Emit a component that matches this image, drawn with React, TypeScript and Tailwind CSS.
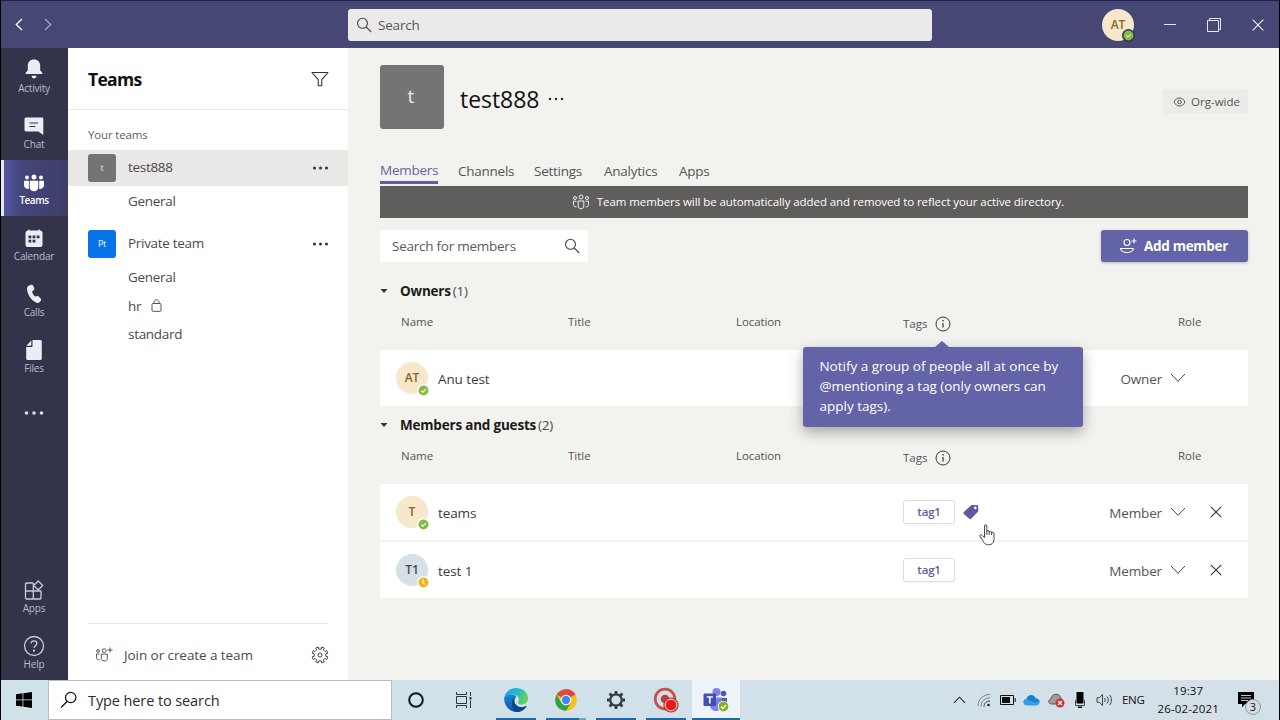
import { useState } from "react";
import type { ReactNode } from "react";

type RailItem = { label: string; icon: ReactNode };

const BellIcon = () => (
  <svg width="20" height="22" viewBox="0 0 20 22" fill="#ececf6">
    <path d="M10 1.500c-3.900 0-6.200 2.700-6.200 6.200v4.600L1.600 15v1h16.800v-1l-2.200-2.700V7.700C16.200 4.200 13.900 1.500 10 1.500z" />
    <path d="M7.400 17.700h5.200l-.9 2.100c-.8.8-2.600.8-3.400 0z" />
  </svg>
);

const ChatIcon = () => (
  <svg width="22" height="22" viewBox="0 0 22 22" className="translate-y-px">
    <path d="M3 2.500h16c.8 0 1.300.5 1.300 1.300V20l-5-3.500H3c-.8 0-1.500-.6-1.500-1.400V3.900c0-.8.7-1.400 1.500-1.400z" fill="#ececf6" />
    <path d="M6.500 8h8.500M6.500 11.500h6" stroke="#33344a" strokeWidth="1.200" />
  </svg>
);

const PeopleFilledIcon = () => (
  <svg width="22" height="20" viewBox="0 0 22 20" fill="#fff" className="translate-y-[3px]">
    <circle cx="4" cy="3.500" r="2" />
    <circle cx="11" cy="3" r="2.500" />
    <circle cx="18" cy="3.500" r="2" />
    <path d="M1 7.700c0-.6.400-1 1-1h3.800v8.200C3 14.900 1 13.400 1 11.200z" />
    <path d="M21 7.700c0-.6-.4-1-1-1h-3.800v8.200c2.800 0 4.800-1.500 4.800-3.700z" />
    <path d="M6.700 7.700c0-.6.400-1 1-1h6.600c.6 0 1 .4 1 1v5.200c0 2.600-1.900 4.300-4.300 4.300s-4.300-1.700-4.300-4.300z" />
  </svg>
);

const CalendarIcon = () => (
  <svg width="20" height="20" viewBox="0 0 20 20" className="translate-y-[1.500px]">
    <path d="M4.800 1v2M15.200 1v2" stroke="#ececf6" strokeWidth="1.200" />
    <rect x="1.500" y="2" width="17" height="16.500" rx="2.500" fill="#ececf6" />
    <g fill="#33344a">
      <rect x="4.500" y="7" width="2.800" height="2.800" />
      <rect x="8.600" y="7" width="2.800" height="2.800" />
      <rect x="12.700" y="7" width="2.800" height="2.800" />
      <rect x="4.500" y="11.200" width="2.800" height="2.800" />
      <rect x="8.600" y="11.200" width="2.800" height="2.800" />
    </g>
  </svg>
);

const PhoneIcon = () => (
  <svg width="16" height="20" viewBox="0 0 16 20" fill="#ececf6" className="translate-y-px">
    <path d="M2.600 1.800 5.200.8c.9-.3 1.600.1 2 .9l1 2.400c.3.7.1 1.400-.4 1.900L6 7.800c.5 1.700 1.600 3.500 3 4.800l2-.6c.7-.2 1.300 0 1.800.5l1.900 2.100c.6.7.6 1.600 0 2.300l-1 1.100c-.8.8-2 1.100-3.100.7C5.500 16.700 1.300 10.800 1 4.800c0-1.400.5-2.500 1.600-3z" />
  </svg>
);

const FileIcon = () => (
  <svg width="18" height="22" viewBox="0 0 18 22" className="translate-y-px">
    <path d="M7.500 1h7.800c.8 0 1.500.7 1.500 1.500v17c0 .8-.7 1.500-1.500 1.500H2.700c-.8 0-1.500-.7-1.500-1.500V8h5.300c.6 0 1-.4 1-1z" fill="#ececf6" />
    <path d="M6.300 1.600v4.200c0 .5-.3.900-.8.900H1.400z" fill="#ececf6" />
  </svg>
);

const AppsIcon = () => (
  <svg width="20" height="20" viewBox="0 0 20 20" fill="none" stroke="#c9cade" strokeWidth="1.300" className="translate-y-px">
    <path d="M9.300 3H2.500c-.5 0-1 .4-1 1v14c0 .5.500 1 1 1H16c.5 0 1-.5 1-1v-7.200M1.500 11H17M9.300 3v16M9.300 11V8" />
    <path d="m14.200 1 4.500 4.500-4.500 4.500-4.500-4.500z" strokeLinejoin="round" />
  </svg>
);

const HelpIcon = () => (
  <svg width="22" height="22" viewBox="0 0 22 22" fill="none" stroke="#c9cade" strokeWidth="1.300" className="translate-y-px">
    <circle cx="11" cy="11" r="9.500" />
    <path d="M8.200 8.600c0-1.800 1.200-2.800 2.800-2.800s2.800 1 2.800 2.600c0 2.200-2.800 2.300-2.800 4.600" />
    <circle cx="11" cy="15.700" r=".5" fill="#c9cade" />
  </svg>
);

const Dots = () => (
  <svg width="22" height="6" viewBox="0 0 22 6" fill="#333">
    <circle cx="4.500" cy="3" r="1.500" />
    <circle cx="10.500" cy="3" r="1.500" />
    <circle cx="16.500" cy="3" r="1.500" />
  </svg>
);

const SearchIcon = () => (
  <svg width="16" height="16" viewBox="0 0 16 16" fill="none" stroke="#484644" strokeWidth="1.100">
    <circle cx="6.500" cy="6.300" r="5" />
    <path d="m10.200 10 5 5" />
  </svg>
);

const ChevronDown = () => (
  <svg width="16" height="10" viewBox="0 0 16 10" fill="none" stroke="#484644" strokeWidth="1">
    <path d="m1 1 7 7.300L15 1" />
  </svg>
);

const InfoIcon = () => (
  <svg width="16" height="16" viewBox="0 0 16 16" fill="none" stroke="#363534" strokeWidth="1">
    <circle cx="8" cy="8" r="7" />
    <path d="M8 7v4.500" strokeWidth="1.200" />
    <circle cx="8" cy="4.800" r=".4" fill="#363534" />
  </svg>
);

const Presence = ({ away }: { away?: boolean }) => (
  <svg width="13" height="13" viewBox="0 0 13 13" className="absolute -right-[1.500px] -bottom-[2.500px]">
    <circle cx="6.500" cy="6.500" r="6.500" fill="#fff" />
    <circle cx="6.500" cy="6.500" r="5" fill={away ? "#f0b51d" : "#86bb48"} />
    <path d={away ? "M6 3.500v3.300l2 1.700" : "m4.200 6.600 1.700 1.600 2.900-3"} fill="none" stroke="#fff" strokeWidth="1.100" />
  </svg>
);

const topItems: RailItem[] = [
  { label: "Activity", icon: <BellIcon /> },
  { label: "Chat", icon: <ChatIcon /> },
  { label: "Teams", icon: <PeopleFilledIcon /> },
  { label: "Calendar", icon: <CalendarIcon /> },
  { label: "Calls", icon: <PhoneIcon /> },
  { label: "Files", icon: <FileIcon /> },
];

const bottomItems: RailItem[] = [
  { label: "Apps", icon: <AppsIcon /> },
  { label: "Help", icon: <HelpIcon /> },
];

const RailButton = ({ item, active, onClick }: { item: RailItem; active?: boolean; onClick?: () => void }) => (
  <button
    type="button"
    onClick={onClick}
    className={`flex h-14 w-full flex-col items-center pt-[10px] ${
      active
        ? "border-l-[3px] border-[#e4e4f6] bg-linear-to-r from-[#5357a0] via-[#44467c] via-25% to-[#3d3e66] pr-[4px] font-semibold text-white"
        : "pr-px text-[#b9bad0]"
    }`}
  >
    <span className="flex h-[22px] items-center">{item.icon}</span>
    <span className={`mt-px text-[10px] leading-[14px] ${active ? "tracking-[-0.5px]" : "tracking-[-0.2px]"}`}>
      {item.label}
    </span>
  </button>
);

const TitleBar = () => (
  <header className="flex h-12 shrink-0 items-center border-t border-[#1f1f45] bg-[#464775]">
    <div className="flex w-[347px] items-center gap-[21px] pl-[14px]">
      <svg width="8" height="13" viewBox="0 0 8 13" fill="none" stroke="#fff" strokeWidth="1.300">
        <path d="M7 1 1.300 6.500 7 12" />
      </svg>
      <svg width="8" height="13" viewBox="0 0 8 13" fill="none" stroke="#a9a9cf" strokeWidth="1.200">
        <path d="m1 1 5.700 5.500L1 12" />
      </svg>
    </div>
    <div className="flex h-8 w-[584px] items-center gap-[6px] rounded-[3px] bg-[#ebeae8] pl-2 text-[13.5px] tracking-[-0.2px] text-[#555]">
      <SearchIcon />
      <span className="pt-px">Search</span>
    </div>
    <div className="ml-[170px] flex items-center">
      <div className="relative flex h-8 w-8 items-center justify-center rounded-full bg-[#f7e7cb] text-[12px] font-semibold text-[#84662d]">
        AT
        <svg width="13" height="13" viewBox="0 0 13 13" className="absolute -right-px -bottom-px">
          <circle cx="6.500" cy="6.500" r="6.500" fill="#33344a" />
          <circle cx="6.500" cy="6.500" r="4.900" fill="#86bb48" />
          <path d="m4.200 6.600 1.700 1.600 2.900-3" fill="none" stroke="#fff" />
        </svg>
      </div>
      <svg width="12" height="14" viewBox="0 0 12 14" className="ml-[30px]" stroke="#e6e6f5" strokeWidth="1">
        <path d="M0 6.500h12" />
      </svg>
      <svg width="16" height="16" viewBox="0 0 16 16" className="ml-[30px]" fill="none" stroke="#e6e6f5" strokeWidth="1">
        <path d="M1.500 3.500h11v11h-11zM3.500 3.500v-2h11v11h-2" />
      </svg>
      <svg width="12" height="12" viewBox="0 0 12 12" className="ml-[30px]" stroke="#f2f2fa" strokeWidth="1.100">
        <path d="m.7.7 10.600 10.600M11.300.7.7 11.300" />
      </svg>
    </div>
  </header>
);

const Channel = ({ name, locked, first }: { name: string; locked?: boolean; first?: boolean }) => (
  <li className={`flex items-center gap-[10px] pl-[60px] ${first ? "h-[30px]" : "h-7"}`}>
    {name}
    {locked && (
      <svg width="11" height="13" viewBox="0 0 11 13" fill="none" stroke="#555" className="-mt-[2px]">
        <rect x="1" y="4.500" width="9" height="7.800" rx="1" />
        <path d="M3 4.500V3.200C3 1.800 4 .8 5.500.8S8 1.800 8 3.200v1.300" />
      </svg>
    )}
  </li>
);

const Sidebar = () => (
  <aside className="flex w-[280px] shrink-0 flex-col bg-white text-[13.5px] tracking-[-0.3px] text-[#4b4a49]">
    <div className="flex h-[62px] items-center justify-between border-b border-[#ebebea] pr-[19px] pl-5">
      <h1 className="pt-[2px] text-[17.500px] font-bold tracking-[-0.7px] text-[#111]">Teams</h1>
      <svg width="18" height="16" viewBox="0 0 18 16" fill="none" stroke="#333" strokeWidth="1.100" strokeLinejoin="round">
        <path d="M1 1.500h16l-6.200 7.200v6H7.200v-6z" />
      </svg>
    </div>
    <p className="h-[40px] pt-[16px] pl-5 text-[11.5px] leading-[18px] tracking-[-0.15px] text-[#615f5e]">Your teams</p>
    <div className="flex h-9 items-center bg-[#e9e8e7] pr-[16px] pl-5">
      <span className="flex h-7 w-7 items-center justify-center rounded-[3px] bg-[#747474] text-[9px] text-[#e5e5e5]">t</span>
      <span className="-mt-[2px] ml-3 flex-1">test888</span>
      <Dots />
    </div>
    <ul>
      <Channel name="General" first />
    </ul>
    <div className="mt-[10px] flex h-9 items-center pr-[16px] pl-5">
      <span className="flex h-7 w-7 items-center justify-center rounded-[3px] bg-[#0673e8] text-[9px] text-white">Pt</span>
      <span className="-mt-px ml-3 flex-1">Private team</span>
      <Dots />
    </div>
    <ul>
      <Channel name="General" first />
      <Channel name="hr" locked />
      <Channel name="standard" />
    </ul>
    <div className="mx-5 mt-auto flex h-[57px] items-center border-t border-[#e6e6e6] pt-[5px] pl-[7px] tracking-[-0.07px]">
      <svg width="18" height="16" viewBox="0 0 18 16" fill="none" stroke="#444" strokeWidth=".9">
        <circle cx="3" cy="4" r="1.400" />
        <circle cx="9.200" cy="3.700" r="1.900" />
        <path d="M4.500 7H1.500v3.500c0 1.500 1 2.300 3 2.300M6.300 7.200h6v4.500c0 1.400-1.300 2.300-3 2.300s-3-.9-3-2.300zM15 .5v5M12.500 3h5" />
      </svg>
      <span className="ml-[11px] flex-1 pt-px">Join or create a team</span>
      <svg width="18" height="18" viewBox="0 0 18 18" fill="none" stroke="#444" strokeLinejoin="round" className="-mr-px">
        <path d="m7.300 1 .4 2 1.300.2 1.300-.2.4-2 2.700 1.100-1.100 1.700 1.700 1.700 1.700-1.100L16.800 7.200l-2 .5v2.600l2 .5-1.100 2.700-1.700-1.100-1.700 1.700 1.100 1.700-2.700 1.100-.4-2H7.700l-.4 2-2.700-1.100 1.100-1.700L4 12.400l-1.700 1.100L1.200 10.800l2-.5V7.700l-2-.5 1.100-2.800L4 5.500l1.700-1.700-1.100-1.700z" />
        <circle cx="9" cy="9" r="2" />
      </svg>
    </div>
  </aside>
);

const Tag = () => (
  <span className="flex h-[24px] w-[52px] items-center justify-center rounded-[3px] border border-[#dcdce8] text-[11.5px] font-semibold tracking-[-0.2px] text-[#5f5d9e] shadow-xs">
    tag1
  </span>
);

const SectionTitle = ({ title, count }: { title: string; count: number }) => (
  <div className="flex h-[30px] items-center text-[13.5px]">
    <svg width="8" height="5" viewBox="0 0 8 5" fill="#333">
      <path d="M.5 0h7L4 4z" />
    </svg>
    <h3 className="ml-3 font-bold tracking-[-0.2px] text-[#1b1a19]">{title}</h3>
    <span className="ml-[2px] tracking-[-0.3px] text-[#4b4a49]">({count})</span>
  </div>
);

const ColumnHeader = ({ tooltip }: { tooltip?: boolean }) => (
  <div className="flex h-11 items-center pb-[12px] pl-[21px] text-[11.5px] text-[#555453]">
    <span className="w-[167px]">Name</span>
    <span className="w-[168px]">Title</span>
    <span className="w-[167px] tracking-[-0.1px]">Location</span>
    <span className="flex w-[275px] items-center pt-1">
      Tags
      <span className="relative ml-[8px]">
        <InfoIcon />
        {tooltip && (
          <span className="absolute top-[31px] -left-[132px] z-10 flex h-20 w-[280px] flex-col rounded-[3px] bg-[#6264a7] px-4 py-[9px] text-[13.5px] leading-5 text-white shadow-[0_5px_14px_rgba(0,0,0,0.32)]">
            <span className="absolute -top-[6px] left-[132px] border-x-[7px] border-b-[6px] border-x-transparent border-b-[#6264a7]" />
            <span className="whitespace-nowrap">Notify a group of people all at once by</span>
            <span className="whitespace-nowrap tracking-[-0.05px]">@mentioning a tag (only owners can</span>
            <span className="whitespace-nowrap">apply tags).</span>
          </span>
        )}
      </span>
    </span>
    <span>Role</span>
  </div>
);

type Member = { initials: string; name: string; role: string; color: string; away?: boolean; tag?: boolean; tagIcon?: boolean };

const MemberRow = ({ initials, name, role, color, away, tag, tagIcon }: Member) => (
  <div className="flex h-14 items-center bg-white pl-4 text-[13.5px] text-[#555453]">
    <div className={`relative flex h-8 w-8 items-center justify-center rounded-full text-[12px] font-semibold ${color}`}>
      {initials}
      <Presence away={away} />
    </div>
    <span className="ml-[10px] w-[465px] pt-[2px] tracking-[-0.1px] text-[#3b3a39]">{name}</span>
    <div className="relative flex w-[160px] items-center gap-[8px]">
      {tag && <Tag />}
      {tagIcon && (
        <svg width="16" height="16" viewBox="0 0 16 16" fill="#6358a0" className="-mt-px">
          <path d="M8.500 1h5.300c.8 0 1.400.6 1.400 1.400v5.200L8.300 14.600c-.8.7-1.500.7-2.200 0L.8 9.900c-.5-.6-.5-1.200 0-1.800zM12.300 2.600a1.300 1.300 0 1 0 0 2.600 1.300 1.300 0 0 0 0-2.600z" fillRule="evenodd" />
        </svg>
      )}
      {tagIcon && (
        <svg width="17" height="22" viewBox="0 0 17 22" className="absolute top-[24px] left-[76px] z-10" fill="#fff" stroke="#333" strokeWidth=".9" strokeLinejoin="round">
          <path d="M5.500 13.500V2c0-1.700 2.300-1.700 2.300 0v5.500c0-1.300 2.400-1.300 2.400 0v.7c0-1.200 2.400-1.200 2.400.2v.7c0-1.200 2.400-1.200 2.400.2v5.200c0 3.500-1.600 6.300-5.500 6.300-3 0-4.200-1.300-5.600-4.200L1 12.300c-.6-1.500 1.200-2.300 2.200-1zM7.800 7.500V11M10.200 8v3M12.600 8.700V11" />
        </svg>
      )}
    </div>
    <div className="flex w-[123px] items-center justify-end gap-2">
      <span className="pt-[2px] tracking-[-0.15px]">{role}</span>
      <ChevronDown />
    </div>
    {tag && (
      <svg width="12" height="12" viewBox="0 0 12 12" className="ml-[24px]" stroke="#333" strokeWidth="1.100">
        <path d="m.8.8 10.400 10.400M11.200.8.8 11.200" />
      </svg>
    )}
  </div>
);

const tabs = [
  { name: "Members", width: "w-[58px]" },
  { name: "Channels", width: "w-[56px]" },
  { name: "Settings", width: "w-[50px]" },
  { name: "Analytics", width: "w-[55px]" },
  { name: "Apps", width: "w-[32px]" },
];

const TeamPage = () => {
  const [tab, setTab] = useState("Members");

  return (
    <main className="flex-1 bg-[#f2f2ee] pr-[31px] pl-8">
      <div className="flex h-[97px] items-start pt-[17px]">
        <div className="flex h-16 w-16 items-center justify-center rounded-[3px] bg-[#747474] pb-px pr-[2px] text-[19px] text-[#e8e8e8]">t</div>
        <h2 className="mt-[18px] ml-4 text-[23px] leading-8 font-medium tracking-[-0.05px] text-[#111]">test888</h2>
        <svg width="16" height="4" viewBox="0 0 16 4" className="mt-[32px] ml-[9px]" fill="#222">
          <circle cx="2" cy="2" r="1.200" />
          <circle cx="8" cy="2" r="1.200" />
          <circle cx="14" cy="2" r="1.200" />
        </svg>
        <div className="mt-[24px] ml-auto flex h-[25px] items-center gap-[5px] rounded-[2px] bg-[#ebebe8] pr-2 pl-[10px] text-[11.5px] text-[#555453]">
          <svg width="13" height="12" viewBox="0 0 12 12" fill="none" stroke="#555">
            <path d="M.6 6C1.700 3.400 3.600 2 6 2s4.300 1.400 5.400 4C10.300 8.600 8.400 10 6 10S1.700 8.600.6 6z" />
            <circle cx="6" cy="6" r="1.800" />
          </svg>
          Org-wide
        </div>
      </div>

      <nav className="mt-[11px] flex h-[30px] gap-5 text-[13.5px] tracking-[-0.25px]">
        {tabs.map((t) => (
          <button
            key={t.name}
            type="button"
            onClick={() => setTab(t.name)}
            className={`${t.width} h-7 whitespace-nowrap text-left ${
              tab === t.name ? "border-b-[3px] border-[#5f5d9e] pt-[3px] leading-[22px] text-[#6264a7]" : "pt-[2px] leading-[26px] text-[#555453]"
            }`}
          >
            {t.name}
          </button>
        ))}
      </nav>

      <div className="flex h-8 items-center justify-center bg-[#5f5e5c] pl-2 text-[11.5px] tracking-[-0.08px] text-white">
        <svg width="18" height="16" viewBox="0 0 18 16" className="mr-[7px]" fill="none" stroke="#fff" strokeWidth=".9">
          <circle cx="3" cy="4" r="1.500" />
          <circle cx="9" cy="3" r="2" />
          <circle cx="15" cy="4" r="1.500" />
          <path d="M4.500 7.200h-3v3.300c0 1.500 1 2.500 3 2.500M13.500 7.200h3v3.300c0 1.500-1 2.500-3 2.500M6.200 7h5.600v5c0 1.700-1.200 2.800-2.800 2.800S6.200 13.700 6.200 12z" />
        </svg>
        Team members will be automatically added and removed to reflect your active directory.
      </div>

      <div className="mt-3 flex h-8 justify-between">
        <div className="flex w-[208px] items-center justify-between rounded-[3px] bg-white pr-2 pl-3 text-[13.5px] tracking-[-0.25px] text-[#5b5a58]">
          Search for members
          <SearchIcon />
        </div>
        <button type="button" className="flex w-[147px] items-center rounded-[3px] bg-[#6264a7] pl-[18px] text-[13.5px] font-bold tracking-[-0.3px] text-white shadow-[0_1px_3px_rgba(0,0,0,0.25)]">
          <svg width="18" height="16" viewBox="0 0 18 16" className="mr-[7px]" fill="none" stroke="#fff" strokeWidth="1.100">
            <circle cx="8" cy="4.500" r="3" />
            <path d="M1.500 10.500h13c-.5 2.700-3 4-6.500 4s-6-1.300-6.500-4zM15 .5v5M12.500 3h5" />
          </svg>
          <span className="pt-px">Add member</span>
        </button>
      </div>

      <section className="mt-[14px]">
        <SectionTitle title="Owners" count={1} />
        <ColumnHeader tooltip />
        <MemberRow initials="AT" name="Anu test" role="Owner" color="bg-[#f7e7cb] text-[#84662d]" />
      </section>
      <section className="mt-[4px]">
        <SectionTitle title="Members and guests" count={2} />
        <ColumnHeader />
        <div className="flex flex-col gap-[2px]">
          <MemberRow initials="T" name="teams" role="Member" color="bg-[#f7e7cb] text-[#84662d]" tag tagIcon />
          <MemberRow initials="T1" name="test 1" role="Member" color="bg-[#d5e0e8] text-[#3c4d57]" away tag />
        </div>
      </section>
    </main>
  );
};

const EdgeIcon = () => (
  <svg width="26" height="26" viewBox="0 0 26 26">
    <defs>
      <linearGradient id="edgeTop" x1="0" y1="0" x2="1" y2=".4">
        <stop offset="0" stopColor="#1e9fe0" />
        <stop offset=".55" stopColor="#2bb9c9" />
        <stop offset="1" stopColor="#5fd35a" />
      </linearGradient>
      <linearGradient id="edgeBody" x1="0" y1="0" x2="0" y2="1">
        <stop offset="0" stopColor="#1a86d6" />
        <stop offset="1" stopColor="#0f57a8" />
      </linearGradient>
    </defs>
    <path d="M1 12c.8 7.500 6 13 12.500 13 4 0 7.300-1.700 9.700-5.200.3-.5-.1-.9-.6-.6-5.600 2.800-11.300-.4-11.300-5.600 0-1.600.6-3 2-4.100C8.500 5.500 2 6.500 1 12z" fill="url(#edgeBody)" />
    <path d="M9.800 12.500c-2 4.500-.5 9.800 3.700 12.500 4 0 7.300-1.700 9.700-5.200.3-.5-.1-.9-.6-.6-5.600 2.800-11.300-.4-11.300-5.600 0-1.300.4-2.500 1.300-3.500-1.200.2-2.200 1.100-2.800 2.400z" fill="#0c4587" />
    <path d="M1 12C1.500 5.700 6.700 1 13 1c6.800 0 12 4.800 12 10.300 0 3.900-2.800 6.200-6.200 6.200-2.200 0-3.800-.9-3.800-1.800 0-.7.900-1.200.9-2.900 0-2.900-2.800-5.200-6.700-5.200-3.900 0-7 1.600-8.200 4.400z" fill="url(#edgeTop)" />
  </svg>
);

const ChromeIcon = () => (
  <svg width="22" height="22" viewBox="0 0 22 22">
    <circle cx="11" cy="11" r="10.800" fill="#fbc116" />
    <path d="M11 11 1.650 5.600A10.800 10.800 0 0 1 20.350 5.600z" fill="#dd4a3c" />
    <path d="M11 5.600h9.350A10.800 10.800 0 0 0 11 .2z" fill="#dd4a3c" />
    <path d="M1.650 5.600A10.800 10.800 0 0 0 11 21.800l4.700-8.100L11 11 6.300 13.700z" fill="#2ea04f" />
    <circle cx="11" cy="11" r="5.300" fill="#fff" />
    <circle cx="11" cy="11" r="4.200" fill="#4285f4" />
  </svg>
);

const CogIcon = () => (
  <svg width="20" height="20" viewBox="0 0 20 20" fill="none" stroke="#333a3d">
    <circle cx="10" cy="10" r="5.700" strokeWidth="2.200" />
    <g strokeWidth="2.800">
      <path d="M10 1v3M10 16v3M1 10h3M16 10h3M3.600 3.600l2.200 2.200M14.200 14.200l2.200 2.200M3.600 16.400l2.200-2.200M14.200 5.800l2.200-2.200" />
    </g>
  </svg>
);

const RecorderIcon = () => (
  <svg width="26" height="26" viewBox="0 0 26 26">
    <circle cx="12" cy="12" r="9.800" fill="none" stroke="#c4514c" strokeWidth="2.800" />
    <circle cx="12" cy="12" r="4.300" fill="#b8433f" />
    <circle cx="18" cy="18" r="7.600" fill="#d01c1c" />
    <circle cx="18" cy="18" r="5.900" fill="#e8181b" stroke="#fff" strokeWidth="1" />
  </svg>
);

const TeamsLogo = () => (
  <svg width="28" height="26" viewBox="0 0 28 26">
    <circle cx="21.500" cy="6.500" r="2.800" fill="#4f55bd" />
    <circle cx="14.500" cy="5" r="4" fill="#7b83eb" />
    <path d="M18 11h7v6c0 3-2 4.500-4 4.500h-3z" fill="#4f55bd" />
    <path d="M8 10.500h12V18c0 3.500-2.700 6-6 6S8 21.500 8 18z" fill="#7b83eb" />
    <rect x="1.500" y="6.500" width="12.500" height="12.500" rx="1.200" fill="#464cb5" />
    <path d="M4.700 10h6.200M7.800 10v6.500" stroke="#fff" strokeWidth="1.600" />
    <circle cx="21.500" cy="19.500" r="5.700" fill="#fff" />
    <circle cx="21.500" cy="19.500" r="4.900" fill="#7fb31e" />
    <path d="m19 19.600 1.800 1.800 3.300-3.500" fill="none" stroke="#fff" strokeWidth="1.400" />
  </svg>
);

const TaskbarApp = ({ children, active, stacked }: { children: ReactNode; active?: boolean; stacked?: boolean }) => (
  <div className={`flex h-full flex-col items-center ${active ? "w-12 bg-[#edf3f9]" : "w-10"}`}>
    <span className="flex flex-1 items-center pt-px">{children}</span>
    <span className={`h-[2px] w-full bg-[#1769b0] ${stacked ? "border-r-[7px] border-[#6fa3cc]" : ""}`} />
  </div>
);

const Taskbar = () => (
  <footer className="flex h-10 shrink-0 bg-linear-to-r from-[#cfe2ea] to-[#d4e0e8] text-[#111]">
    <div className="flex w-[47px] items-center pl-[15px]">
      <svg width="16" height="16" viewBox="0 0 17 17" fill="#000">
        <path d="M0 2.300 7 1.300V8H0zM7.800 1.200 17 0v8H7.800zM0 8.800h7v6.700l-7-1zM7.800 8.800H17V17l-9.200-1.300z" />
      </svg>
    </div>
    <div className="flex w-[344px] items-center border border-[#b9bcbe] bg-white pl-[11px] text-[14.5px] tracking-[-0.1px] text-[#2b2b2b]">
      <svg width="18" height="18" viewBox="0 0 18 18" fill="none" stroke="#111" strokeWidth="1.200">
        <circle cx="10.700" cy="6.500" r="5.200" />
        <path d="m7 10.500-6 6" />
      </svg>
      <span className="ml-[10px] pt-px">Type here to search</span>
    </div>
    <div className="ml-4 flex items-center">
      <svg width="16" height="16" viewBox="0 0 16 16" fill="none" stroke="#10181c" strokeWidth="2">
        <circle cx="8" cy="8" r="6.800" />
      </svg>
      <svg width="18" height="16" viewBox="0 0 18 16" className="ml-[31px]" fill="none" stroke="#333">
        <path d="M1.500 0v2.500h10V0M1.500 4.500h10v7h-10zM1.500 16v-2.500h10V16M15.500 0v4M15.500 8.500V16" />
        <path d="M14.500 5h2v2.500h-2z" fill="#333" stroke="none" />
      </svg>
    </div>
    <div className="ml-[23px] flex">
      <TaskbarApp><EdgeIcon /></TaskbarApp>
      <div className="ml-[10px]" />
      <TaskbarApp stacked><ChromeIcon /></TaskbarApp>
      <div className="ml-[10px]" />
      <TaskbarApp><CogIcon /></TaskbarApp>
      <div className="ml-[10px]" />
      <TaskbarApp><RecorderIcon /></TaskbarApp>
      <div className="ml-[6px]" />
      <TaskbarApp active><TeamsLogo /></TaskbarApp>
    </div>
    <div className="ml-auto flex items-center text-[11.5px]">
      <svg width="13" height="8" viewBox="0 0 14 8" fill="none" stroke="#222" strokeWidth="1.100">
        <path d="m1 7 6-6 6 6" />
      </svg>
      <svg width="14" height="14" viewBox="0 0 14 14" className="ml-[11px]" fill="none" stroke="#7b858b">
        <path d="M1 13C1 6.500 6 1.500 13 1.500M4 13.500C4 8.500 8 4.800 13 4.800" />
        <path d="M7 13.500C7 10.500 9.500 8 13 8" stroke="#333" />
        <circle cx="11.500" cy="12" r="1.300" fill="#222" stroke="none" />
      </svg>
      <svg width="16" height="10" viewBox="0 0 16 10" className="ml-[9px]" fill="none" stroke="#111">
        <path d="M.5.500h13v9H.5zM15.200 3v4" />
        <path d="M2 2h8v6H2z" fill="#111" stroke="none" />
      </svg>
      <svg width="17" height="12" viewBox="0 0 18 12" className="ml-[7px]">
        <path d="M4 11.500C1.500 11.500.5 9.800.5 8.300c0-1.700 1.400-3 3-3C4.200 2.500 6 .8 8.500.8c2.300 0 4 1.300 4.700 3.400 2.500 0 4.300 1.500 4.300 3.800 0 2-1.500 3.500-3.500 3.500z" fill="#1281d8" />
        <path d="m4 5.300 9 3.500 4.400-1.500c0 2.500-1.400 4.200-3.400 4.200H4C0 11.500 0 6 4 5.300z" fill="#33a0ec" />
      </svg>
      <svg width="17" height="15" viewBox="0 0 17 15" className="ml-[8px]">
        <path d="M3.500 11C0 11 0 6.200 3 6 3.300 3 5.500 1.200 8 1.200c2.500 0 4 1.300 4.600 3.300L14 7l-5 4z" fill="#a39d99" stroke="#5d5856" />
        <circle cx="12" cy="10" r="4.500" fill="#cf2f33" />
        <path d="m10 8 4 4M14 8l-4 4" stroke="#fff" strokeWidth="1.200" />
      </svg>
      <svg width="12" height="17" viewBox="0 0 12 17" className="ml-[9px]" fill="#000">
        <rect x="2.500" y="0" width="7" height="11.500" rx=".8" />
        <path d="M1.500 8v5.500h9V8" fill="none" stroke="#222" strokeWidth=".8" />
        <rect x="4" y="14.500" width="4" height="1.500" />
      </svg>
      <svg width="17" height="14" viewBox="0 0 17 14" className="ml-[10px]" fill="none" stroke="#333" strokeWidth=".9">
        <path d="M1 4.800h2.300L6.500 1.500v11L3.300 9.200H1zM8.500 5c1 1.200 1 2.800 0 4M11 3.500c1.800 2 1.800 5 0 7M13.500 2c2.600 2.800 2.600 7.200 0 10" />
      </svg>
      <span className="ml-[9px] tracking-[-0.3px]">ENG</span>
      <div className="ml-[13px] flex flex-col items-center leading-[18px] tracking-[0.15px]">
        <span>19:37</span>
        <span>26-02-2021</span>
      </div>
      <div className="relative mr-[17px] ml-[19px] h-6 w-6">
        <svg width="16" height="16" viewBox="0 0 16 16" className="mt-[4px]">
          <path d="M0 0h16v12H7l-3 3.500V12H0z" fill="#000" />
          <path d="M3 3.500h10M3 6h10M3 8.500h7" stroke="#cfdbe2" strokeWidth=".9" />
        </svg>
        <span className="absolute top-[11px] left-[7px] flex h-4 w-4 items-center justify-center rounded-full border border-[#8d969c] bg-[#d5dde3] text-[11px]">3</span>
      </div>
    </div>
  </footer>
);

export default function App() {
  const [section, setSection] = useState("Teams");

  return (
    <div className="flex h-[720px] w-[1280px] flex-col overflow-hidden border-r border-l border-black bg-white font-['Open_Sans',sans-serif]">
      <TitleBar />
      <div className="flex min-h-0 flex-1">
        <nav className="flex w-[67px] shrink-0 flex-col bg-[#33344a]">
          {topItems.map((item) => (
            <RailButton key={item.label} item={item} active={section === item.label} onClick={() => setSection(item.label)} />
          ))}
          <div className="flex h-14 items-center justify-center pt-[2px] pr-px text-[#dcdcec]">
            <svg width="22" height="6" viewBox="0 0 22 6" fill="currentColor">
              <circle cx="3.500" cy="3" r="1.800" />
              <circle cx="11" cy="3" r="1.800" />
              <circle cx="18.500" cy="3" r="1.800" />
            </svg>
          </div>
          <div className="mt-auto">
            {bottomItems.map((item) => (
              <RailButton key={item.label} item={item} />
            ))}
          </div>
        </nav>
        <Sidebar />
        <TeamPage />
      </div>
      <Taskbar />
    </div>
  );
}
